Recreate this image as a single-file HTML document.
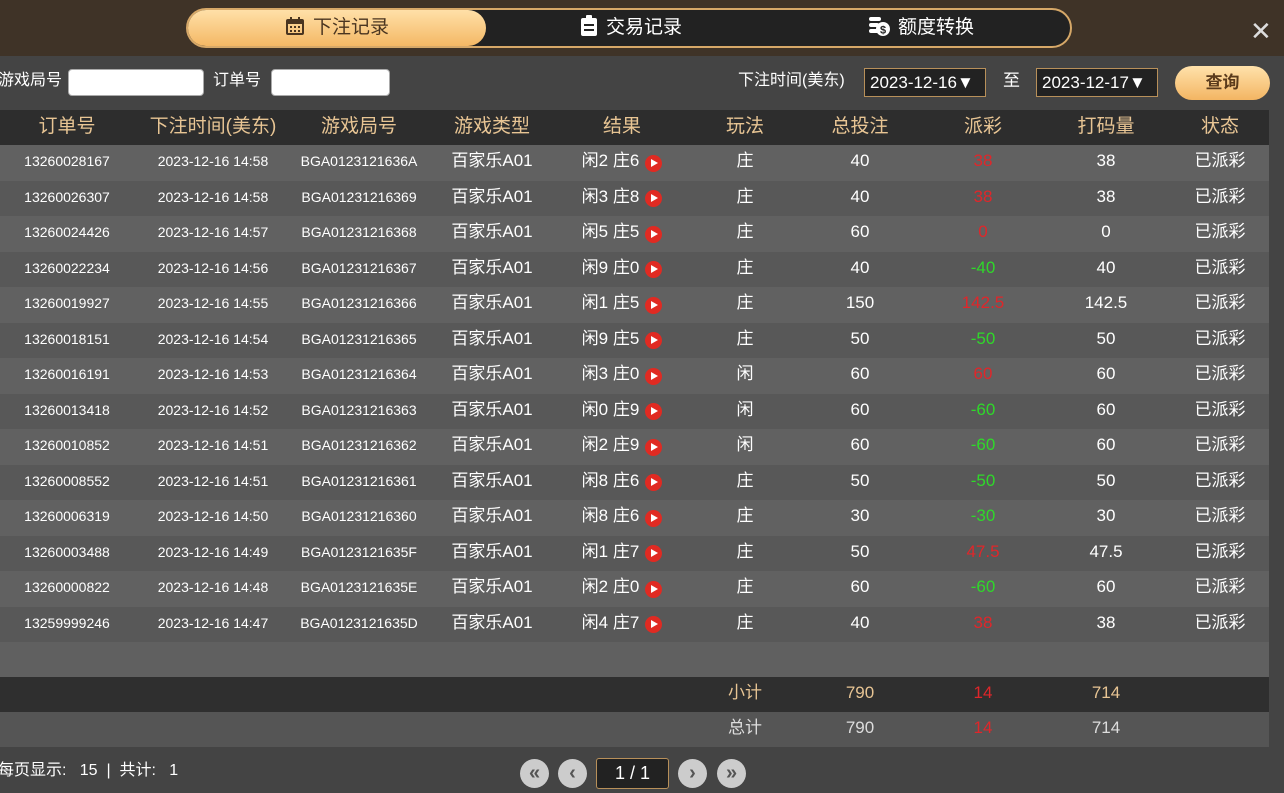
<!DOCTYPE html>
<html><head><meta charset="utf-8"><style>
*{margin:0;padding:0;box-sizing:border-box}
body{width:1284px;height:793px;overflow:hidden;background:#444;font-family:"Liberation Sans","Noto Sans CJK SC",sans-serif;color:#fff;position:relative}
.top{position:absolute;left:0;top:0;width:1284px;height:56px;background:#3f3327}
.tabs{position:absolute;left:186px;top:8px;width:886px;height:40px;border:2px solid #d6a868;border-radius:20px;background:#222}
.tab{position:absolute;top:0;height:36px;line-height:36px;font-size:19px;color:#fff;text-align:center}
.tab.on{left:0;width:298px;background:linear-gradient(#ffe0a8,#f4b865);border-radius:18px;color:#4a3520}
.close{position:absolute;left:1250px;top:16px;font-size:26px;color:#ddd}
.filter{position:absolute;left:0;top:56px;width:1284px;height:54px;background:#444}
.lbl{position:absolute;font-size:16px;color:#fff;top:70px;line-height:22px}
.inp{position:absolute;top:69px;height:27px;background:#fff;border-radius:4px;border:1px solid #aaa}
.date{position:absolute;top:68px;height:29px;width:122px;background:#222;border:1px solid #b8905a;font-size:17px;line-height:27px;padding-left:5px}
.btn{position:absolute;left:1175px;top:66px;width:95px;height:34px;border-radius:17px;background:linear-gradient(#ffe2ab,#f3b563);color:#5a3b1c;font-size:17px;font-weight:bold;text-align:center;line-height:34px}
.row{position:absolute;left:0;width:1269px;height:36px}
.c{position:absolute;top:0;height:100%;display:flex;align-items:center;justify-content:center;white-space:nowrap;line-height:20px;padding-bottom:3px}
.h .c{color:#e8c594;font-size:19px;padding-bottom:1px}
.play{display:inline-block;width:17px;height:17px;border-radius:50%;background:#e02a22;margin-left:6px;position:relative;top:2px}
.play:after{content:"";position:absolute;left:6px;top:4px;border-left:7px solid #fff;border-top:4.5px solid transparent;border-bottom:4.5px solid transparent}
.red{color:#e0262a}.grn{color:#2fd82a}.gold{color:#e8c594}
.pg{position:absolute;top:759px;width:29px;height:29px;border-radius:50%;background:#ccc;color:#555;text-align:center;line-height:28px;font-size:20px;font-weight:bold}
</style></head><body>
<div class="top"></div>
<div class="tabs">
<div class="tab on"><svg width="20" height="20" viewBox="0 0 20 20" style="vertical-align:-3px;margin-right:8px"><rect x="2" y="4" width="16" height="14" rx="1" fill="none" stroke="#4a3520" stroke-width="2"/><rect x="2" y="4" width="16" height="4" fill="#4a3520"/><rect x="5" y="1" width="2" height="5" fill="#4a3520"/><rect x="13" y="1" width="2" height="5" fill="#4a3520"/><g fill="#4a3520"><rect x="5" y="10" width="2" height="2"/><rect x="9" y="10" width="2" height="2"/><rect x="13" y="10" width="2" height="2"/><rect x="5" y="14" width="2" height="2"/><rect x="9" y="14" width="2" height="2"/><rect x="13" y="14" width="2" height="2"/></g></svg>下注记录</div>
<div class="tab" style="left:298px;width:290px"><svg width="18" height="22" viewBox="0 0 18 22" style="vertical-align:-4px;margin-right:8px"><rect x="1" y="3" width="16" height="18" rx="2" fill="#fff"/><rect x="6" y="0" width="6" height="5" rx="1" fill="#fff"/><rect x="4" y="9" width="10" height="2" fill="#222"/><rect x="4" y="14" width="10" height="2" fill="#222"/></svg>交易记录</div>
<div class="tab" style="left:588px;width:290px"><svg width="22" height="22" viewBox="0 0 22 22" style="vertical-align:-4px;margin-right:8px"><g fill="#fff"><rect x="1" y="2" width="12" height="4" rx="2"/><rect x="1" y="8" width="10" height="4" rx="2"/><rect x="1" y="14" width="10" height="4" rx="2"/><circle cx="15" cy="14" r="7"/></g><text x="15" y="18.5" font-size="11" font-weight="bold" text-anchor="middle" fill="#222" font-family="Liberation Sans">$</text></svg>额度转换</div>
</div>
<div class="close">✕</div>
<div class="filter"></div>
<div class="lbl" style="left:-2px">游戏局号</div>
<div class="inp" style="left:68px;width:136px"></div>
<div class="lbl" style="left:213px">订单号</div>
<div class="inp" style="left:271px;width:119px"></div>
<div class="lbl" style="left:738px">下注时间(美东)</div>
<div class="date" style="left:864px">2023-12-16▼</div>
<div class="lbl" style="left:1003px;font-size:17px">至</div>
<div class="date" style="left:1036px">2023-12-17▼</div>
<div class="btn">查询</div>

<div class="row h" style="top:110px;height:35px;background:#2d2d2d">
<div class="c" style="left:0;width:134px">订单号</div><div class="c" style="left:146px;width:134px">下注时间(美东)</div><div class="c" style="left:292px;width:134px">游戏局号</div><div class="c" style="left:425px;width:134px">游戏类型</div><div class="c" style="left:555px;width:134px">结果</div><div class="c" style="left:678px;width:134px">玩法</div><div class="c" style="left:793px;width:134px">总投注</div><div class="c" style="left:916px;width:134px">派彩</div><div class="c" style="left:1039px;width:134px">打码量</div><div class="c" style="left:1153px;width:134px">状态</div>
</div>
<div id="rows"></div>
<div class="row" style="top:642px;height:35px;background:#606060"></div>
<div class="row" style="top:677px;height:35px;background:#2f2f2f;font-size:17px">
<div class="c gold" style="left:678px;width:134px">小计</div><div class="c gold" style="left:793px;width:134px">790</div><div class="c red" style="left:916px;width:134px">14</div><div class="c gold" style="left:1039px;width:134px">714</div></div>
<div class="row" style="top:712px;height:35px;background:#555;font-size:17px;color:#ddd">
<div class="c" style="left:678px;width:134px">总计</div><div class="c" style="left:793px;width:134px">790</div><div class="c red" style="left:916px;width:134px">14</div><div class="c" style="left:1039px;width:134px">714</div></div>
<div class="lbl" style="left:-2px;top:760px">每页显示:&nbsp;&nbsp; 15&nbsp; |&nbsp; 共计:&nbsp;&nbsp; 1</div>
<div class="pg" style="left:520px">«</div><div class="pg" style="left:558px">‹</div>
<div style="position:absolute;left:596px;top:758px;width:73px;height:31px;background:#222;border:1px solid #b8905a;border-radius:3px;text-align:center;line-height:29px;font-size:18px">1 / 1</div>
<div class="pg" style="left:678px">›</div><div class="pg" style="left:717px">»</div>
<script>
var d=[["13260028167","14:58","BGA0123121636A","闲2 庄6","庄",40,"38","r","38"],
["13260026307","14:58","BGA01231216369","闲3 庄8","庄",40,"38","r","38"],
["13260024426","14:57","BGA01231216368","闲5 庄5","庄",60,"0","r","0"],
["13260022234","14:56","BGA01231216367","闲9 庄0","庄",40,"-40","g","40"],
["13260019927","14:55","BGA01231216366","闲1 庄5","庄",150,"142.5","r","142.5"],
["13260018151","14:54","BGA01231216365","闲9 庄5","庄",50,"-50","g","50"],
["13260016191","14:53","BGA01231216364","闲3 庄0","闲",60,"60","r","60"],
["13260013418","14:52","BGA01231216363","闲0 庄9","闲",60,"-60","g","60"],
["13260010852","14:51","BGA01231216362","闲2 庄9","闲",60,"-60","g","60"],
["13260008552","14:51","BGA01231216361","闲8 庄6","庄",50,"-50","g","50"],
["13260006319","14:50","BGA01231216360","闲8 庄6","庄",30,"-30","g","30"],
["13260003488","14:49","BGA0123121635F","闲1 庄7","庄",50,"47.5","r","47.5"],
["13260000822","14:48","BGA0123121635E","闲2 庄0","庄",60,"-60","g","60"],
["13259999246","14:47","BGA0123121635D","闲4 庄7","庄",40,"38","r","38"]];
var h="";
d.forEach(function(r,i){
var t=145+i*35.5;
h+='<div class="row" style="top:'+t+'px;height:35.5px;background:'+(i%2?'#585858':'#616161')+'">'+
'<div class="c" style="left:0;width:134px;font-size:14px">'+r[0]+'</div>'+
'<div class="c" style="left:146px;width:134px;font-size:14px">2023-12-16 '+r[1]+'</div>'+
'<div class="c" style="left:292px;width:134px;font-size:14px">'+r[2]+'</div>'+
'<div class="c" style="left:425px;width:134px;font-size:17px">百家乐A01</div>'+
'<div class="c" style="left:555px;width:134px;font-size:17px">'+r[3]+'<span class="play"></span></div>'+
'<div class="c" style="left:678px;width:134px;font-size:17px">'+r[4]+'</div>'+
'<div class="c" style="left:793px;width:134px;font-size:17px">'+r[5]+'</div>'+
'<div class="c '+(r[7]=="r"?"red":"grn")+'" style="left:916px;width:134px;font-size:17px">'+r[6]+'</div>'+
'<div class="c" style="left:1039px;width:134px;font-size:17px">'+r[8]+'</div>'+
'<div class="c" style="left:1153px;width:134px;font-size:17px">已派彩</div></div>';});
document.getElementById("rows").innerHTML=h;
</script>
</body></html>
